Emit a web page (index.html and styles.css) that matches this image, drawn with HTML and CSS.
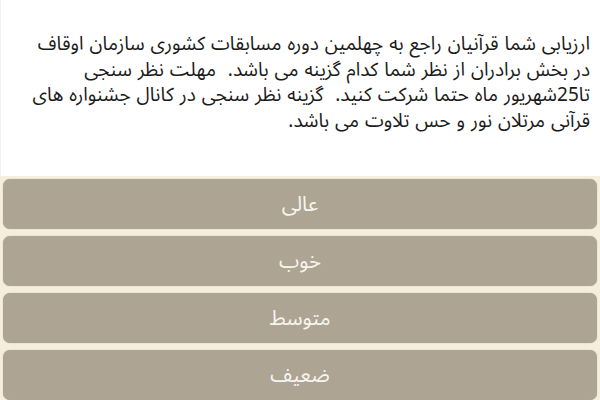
FILE: index.html
```html
<!DOCTYPE html>
<html lang="fa" dir="rtl">
<head>
<meta charset="utf-8">
<link rel="stylesheet" href="styles.css">
</head>
<body>
<div class="question">
<p class="question-text">ارزیابی شما قرآنیان راجع به چهلمین دوره مسابقات کشوری سازمان اوقاف<br>در بخش برادران از نظر شما کدام گزینه می باشد.&nbsp; مهلت نظر سنجی<br>تا25شهریور ماه حتما شرکت کنید.&nbsp; گزینه نظر سنجی در کانال جشنواره های<br>قرآنی مرتلان نور و حس تلاوت می باشد.</p>
</div>
<div class="options">
<button class="option">عالی</button>
<button class="option">خوب</button>
<button class="option">متوسط</button>
<button class="option">ضعیف</button>
</div>
</body>
</html>
```
FILE: styles.css
```css
html, body {
  margin: 0;
  padding: 0;
}
body {
  background: #f4eedb;
  font-family: "Noto Sans Arabic", "DejaVu Sans", sans-serif;
  width: 600px;
  height: 400px;
  overflow: hidden;
}
.question {
  background: #ffffff;
  height: 176px;
  box-sizing: border-box;
  padding: 32px 10px 0 10px;
  border-left: 1px solid #f3f0e6;
}
.question-text {
  margin: 0;
  font-size: 19px;
  line-height: 25.5px;
  word-spacing: 1px;
  color: #1a1a1a;
  text-align: right;
  white-space: nowrap;
}
.options {
  display: flex;
  flex-direction: column;
  gap: 7px;
  padding: 3px 3px 0 3px;
}
.option {
  height: 50px;
  border: none;
  border-radius: 7px;
  background: #ada493;
  color: #f7f5f0;
  font-family: "Noto Sans Arabic", "DejaVu Sans", sans-serif;
  font-size: 20.5px;
  box-shadow: 0 0 1px rgba(120, 110, 90, 0.5);
  padding: 0;
}
```
